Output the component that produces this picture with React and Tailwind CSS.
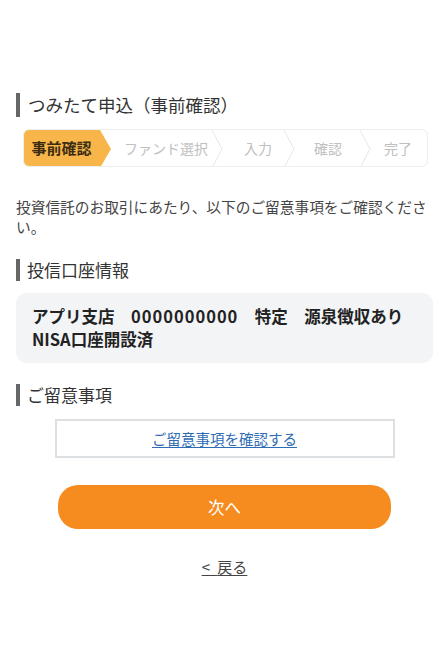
import React from "react"

const font = { fontFamily: '"Noto Sans CJK JP", "Noto Sans", sans-serif' }

const Chevron = () => (
    <svg width="12" height="38" viewBox="0 0 12 38" className="shrink-0">
        <polyline points="1,0 11,19 1,38" fill="none" stroke="#e6e6e6" strokeWidth="1" />
    </svg>
)

const SectionTitle = ({ children, className = "" }) => (
    <h2 className={`flex items-center gap-[7px] text-[17px] leading-[24px] text-[#333] ${className}`}>
        <span className="w-[4px] h-[22px] bg-[#666] shrink-0"></span>
        {children}
    </h2>
)

const App = () => {
    return (
        <div className="w-[446px] min-h-[664px] bg-white pl-4 pr-[13px] pt-[92px]" style={font}>
            {/* タイトル */}
            <h1 className="flex items-center gap-[8px] text-[17.5px] leading-[25px] text-[#333]">
                <span className="w-[4px] h-[24px] bg-[#666] shrink-0"></span>
                つみたて申込（事前確認）
            </h1>

            {/* ステップ */}
            <div className="mt-[12px] ml-[7px] w-[405px] h-[38px] flex items-stretch border border-[#eeeeee] rounded-[6px] overflow-hidden whitespace-nowrap">
                <div className="w-[75px] shrink-0 bg-[#f8b64a] flex items-center justify-center text-[15px] font-bold text-[#3b2c12]">
                    事前確認
                </div>
                <svg width="12" height="38" viewBox="0 0 12 38" className="shrink-0">
                    <polygon points="0,0 1,0 12,19 1,38 0,38" fill="#f8b64a" />
                </svg>
                <div className="w-[100px] shrink-0 flex items-center pl-[13px] text-[14px] text-[#c0c0c0]">ファンド選択</div>
                <Chevron />
                <div className="w-[60px] shrink-0 flex items-center pl-[21px] text-[14px] text-[#c0c0c0]">入力</div>
                <Chevron />
                <div className="w-[64px] shrink-0 flex items-center pl-[19px] text-[14px] text-[#c0c0c0]">確認</div>
                <Chevron />
                <div className="flex-1 flex items-center pl-[13px] text-[14px] text-[#c0c0c0]">完了</div>
            </div>

            {/* 説明文 */}
            <p className="mt-[30px] text-[14.7px] leading-[20px] text-[#444]">
                投資信託のお取引にあたり、以下のご留意事項をご確認ください。
            </p>

            {/* 投信口座情報 */}
            <SectionTitle className="mt-[21px]">投信口座情報</SectionTitle>
            <div className="mt-[11px] bg-[#f3f4f6] rounded-[11px] px-[16px] py-[12px] text-[16.5px] leading-[23px] font-bold text-[#222] whitespace-nowrap">
                <div>
                    アプリ支店　<span className="tracking-[1px]">0000000000</span>　特定　源泉徴収あり
                </div>
                <div>NISA口座開設済</div>
            </div>

            {/* ご留意事項 */}
            <SectionTitle className="mt-[20px]">ご留意事項</SectionTitle>
            <div className="mt-[12px] mx-auto w-[340px] h-[39px] border-2 border-[#dde0e3] flex items-center justify-center">
                <a href="#" className="text-[14.5px] text-[#2e6db4] underline underline-offset-2">
                    ご留意事項を確認する
                </a>
            </div>

            {/* ボタン */}
            <button className="mt-[27px] mx-auto block w-[333px] h-[44px] rounded-[20px] bg-[#f68b20] text-white text-[16.5px]">
                次へ
            </button>

            <div className="mt-[25px] text-center">
                <a href="#" className="text-[15px] text-[#444] underline underline-offset-2">
                    <span className="tracking-[2px]">&lt; </span>戻る
                </a>
            </div>
        </div>
    )
}

export default App
